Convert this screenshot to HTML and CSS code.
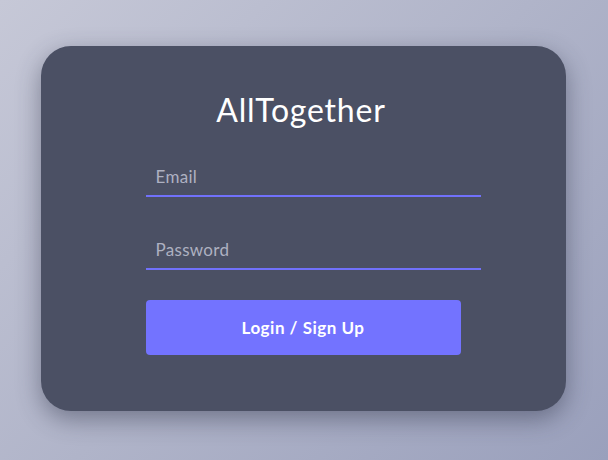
FILE: index.html
```html
<!DOCTYPE html>
<html>
<head>
<meta charset="utf-8">
<link rel="stylesheet" href="styles.css">
</head>
<body>
<div class="page">
  <div class="card">
    <h1 class="title">AllTogether</h1>
    <form class="form">
      <input class="field" type="text" placeholder="Email">
      <input class="field" type="password" placeholder="Password">
      <button class="btn" type="button">Login / Sign Up</button>
    </form>
  </div>
</div>
</body>
</html>
```
FILE: styles.css
```css
* { box-sizing: border-box; }
html, body { margin: 0; height: 100%; }
body {
  font-family: "Lato", "Open Sans", sans-serif;
  background: linear-gradient(135deg, #c6c8d7 0%, #b0b4c9 50%, #9aa0bc 100%);
}
.page {
  height: 460px;
  display: flex;
  align-items: center;
  justify-content: center;
  padding-bottom: 3px;
  padding-right: 2px;
}
.card {
  width: 525px;
  height: 365px;
  background: #4b5064;
  border-radius: 30px;
  box-shadow: 0 8px 24px rgba(40, 44, 64, 0.45);
  display: flex;
  flex-direction: column;
  align-items: center;
  padding-top: 44px;
}
.title {
  margin: 0;
  padding-right: 4px;
  color: #ffffff;
  font-size: 32px;
  font-weight: 400;
  line-height: 40px;
  letter-spacing: 0.8px;
}
.form {
  width: 315px;
  margin-top: 27px;
  display: flex;
  flex-direction: column;
}
.field {
  width: 335px;
  height: 40px;
  padding: 0 10px;
  background: transparent;
  border: none;
  border-bottom: 2px solid #7171fb;
  color: #ffffff;
  font-family: inherit;
  font-size: 17px;
  letter-spacing: 0.3px;
  outline: none;
}
.field::placeholder { color: #aeb1c1; }
.field + .field { margin-top: 33px; }
.btn {
  margin-top: 30px;
  width: 315px;
  height: 55px;
  border: none;
  border-radius: 4px;
  background: #7373ff;
  color: #ffffff;
  font-family: inherit;
  font-size: 17px;
  font-weight: 700;
  letter-spacing: 0.5px;
}
```
